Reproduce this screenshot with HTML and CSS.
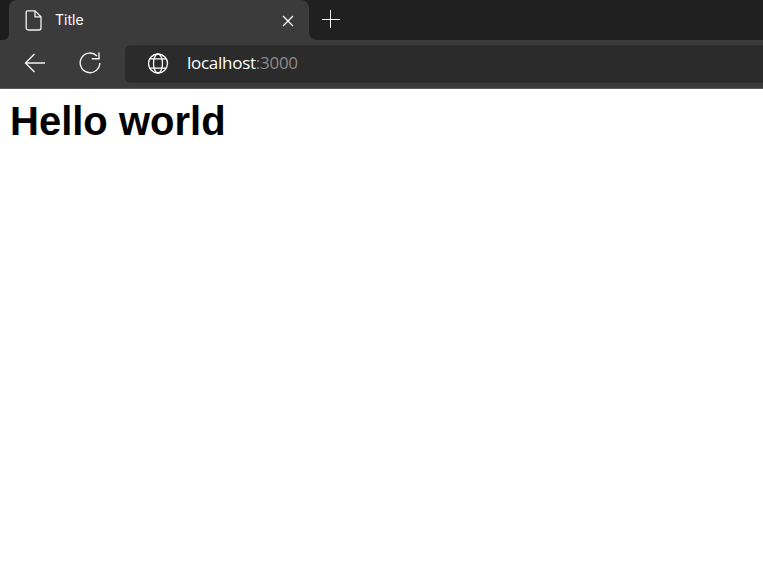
FILE: index.html
```html
<!DOCTYPE html>
<html lang="en">
<head>
<meta charset="utf-8">
<title>Title</title>
<link rel="stylesheet" href="styles.css">
</head>
<body>
<header class="browser">
  <div class="tabstrip">
    <div class="tab-spacer"></div>
    <div class="tab">
      <svg class="icon-file" width="18" height="21" viewBox="0 0 18 21" fill="none" stroke="#f2f2f2" stroke-width="1.3"><path d="M2.500 .8H10L16 6.800V18a2 2 0 0 1-2 2H3.200a2 2 0 0 1-2-2V2a1.200 1.200 0 0 1 1.300-1.200Z"/><path d="M10 1V6.800H16"/></svg>
      <span class="tab-title">Title</span>
      <svg class="icon-close" width="12" height="12" viewBox="0 0 12 12" stroke="#fff" stroke-width="1.300"><path d="M1 1L11 11M11 1L1 11"/></svg>
    </div>
    <div class="newtab">
      <svg width="18" height="18" viewBox="0 0 18 18" stroke="#fff" stroke-width="1"><path d="M0 9.500H18M8.500 0V18"/></svg>
    </div>
  </div>
  <div class="toolbar">
    <svg class="tool back" width="22" height="20" viewBox="0 0 22 20" fill="none" stroke="#f2f2f2" stroke-width="1.400"><path d="M21 10H1.500M10.500 1L1.500 10L10.500 19"/></svg>
    <svg class="tool reload" width="22" height="22" viewBox="0 0 22 22" fill="none" stroke="#f2f2f2" stroke-width="1.400"><path d="M18 4A9.800 9.800 0 1 0 20.800 11"/><path d="M12.700 6.700H20V.5"/></svg>
    <div class="address">
      <svg class="globe" width="21" height="21" viewBox="0 0 21 21" fill="none" stroke="#fff" stroke-width="1.300"><circle cx="10" cy="10.500" r="9.500"/><ellipse cx="10" cy="10.500" rx="4.500" ry="9.500"/><path d="M1.500 5.800H18.500M1.500 15.200H18.500"/></svg>
      <span class="url"><span class="host">localhost</span><span class="port">:3000</span></span>
    </div>
  </div>
</header>
<main class="page">
  <h1 class="headline">Hello world</h1>
</main>
</body>
</html>
```
FILE: styles.css
```css
* { box-sizing: border-box; }
html, body { margin: 0; padding: 0; background: #fff; }
body { font-family: "Liberation Sans", Arial, sans-serif; overflow: hidden; height: 578px; }

.browser { background: #3b3b3b; }

.tabstrip {
  display: flex;
  height: 40px;
  background: linear-gradient(#202020 50%, #3b3b3b 50%);
}
.tab-spacer {
  width: 9px;
  background: #1d1d1d;
  border-radius: 0 0 6px 0;
}
.tab {
  flex: none;
  width: 300px;
  height: 40px;
  background: #3b3b3b;
  border-radius: 8px 8px 0 0;
  display: flex;
  align-items: center;
  padding: 0 15px 0 16px;
  color: #fff;
}
.icon-file { flex: none; }
.tab-title {
  flex: 1;
  margin-left: 12px;
  padding-bottom: 2px;
  font: 14px "Inter", "Liberation Sans", sans-serif;
}
.icon-close { flex: none; margin-top: 1px; }
.newtab {
  flex: 1;
  height: 40px;
  display: flex;
  align-items: center;
  padding: 0 0 2px 13px;
  background: #202020;
  border-radius: 0 0 0 8px;
}

.toolbar {
  height: 49px;
  display: flex;
  align-items: center;
  padding-left: 24px;
  background: #3b3b3b;
  border-bottom: 1px solid #5a5a5a;
}
.tool { flex: none; margin-bottom: 2px; }
.back { margin-right: 33px; }
.reload { margin-right: 24px; }
.address {
  flex: 1;
  height: 38px;
  background: #2b2b2b;
  border-radius: 6px 0 0 6px;
  display: flex;
  align-items: center;
  padding-left: 23px;
}
.globe { margin-bottom: 1px; }
.url {
  margin-left: 18px;
  padding-bottom: 3px;
  font: 17px "Open Sans", "Liberation Sans", sans-serif;
  letter-spacing: -0.27px;
}
.host { color: #fff; }
.port { color: #8a8a8a; }

.page { padding: 10px; }
.headline {
  margin: 0;
  font: bold 40px/44px "Liberation Sans", Arial, sans-serif;
  color: #000;
}
```
